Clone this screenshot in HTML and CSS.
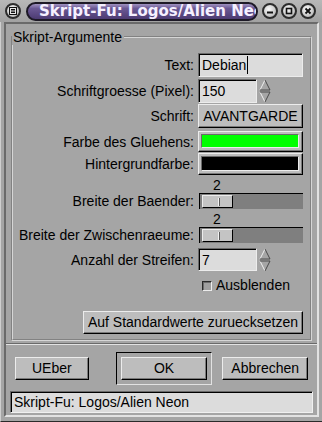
FILE: index.html
```html
<!DOCTYPE html>
<html>
	<head>
		<link rel="stylesheet" href="styles.css">
	</head>
	<body>
		<div class="window">
			<div class="titlebar">
				<span class="knob">
					<svg width="8" height="8" viewBox="0 0 8 8"><rect x="0.5" y="0.5" width="7" height="7" fill="#e8e8e8" stroke="#111"/><path d="M2 2.5h4M2 4h4M2 5.5h4" stroke="#111" stroke-width="1"/></svg>
				</span>
				<div class="pill"><span>Skript-Fu: Logos/Alien Neon</span></div>
				<span class="knob">
					<svg width="8" height="8" viewBox="0 0 8 8"><path d="M1 5.5h6" stroke="#111" stroke-width="2"/></svg>
				</span>
				<span class="knob">
					<svg width="8" height="8" viewBox="0 0 8 8"><rect x="1.5" y="1.5" width="5" height="5" fill="none" stroke="#111" stroke-width="1.6"/></svg>
				</span>
				<span class="knob">
					<svg width="8" height="8" viewBox="0 0 8 8"><path d="M1.5 1.5l5 5M6.5 1.5l-5 5" stroke="#111" stroke-width="1.8"/></svg>
				</span>
			</div>
			<div class="client">
				<fieldset class="args">
					<legend>Skript-Argumente</legend>

					<div class="row r-text">
						<span class="lbl">Text:</span>
						<div class="field entry">Debian<span class="caret"></span></div>
					</div>

					<div class="row r-size">
						<span class="lbl">Schriftgroesse (Pixel):</span>
						<div class="field spin">
							<div class="entry">150</div>
							<svg class="arrows" width="12" height="24" viewBox="0 0 12 24">
								<path d="M6 1L1 11" stroke="#f0f0f0" fill="none"/>
								<path d="M6 1L11 11H1" stroke="#4a4a4a" fill="none"/>
								<path d="M1 13L6 23" stroke="#f0f0f0" fill="none"/>
								<path d="M1 13H11L6 23" stroke="#4a4a4a" fill="none"/>
							</svg>
						</div>
					</div>

					<div class="row r-font">
						<span class="lbl">Schrift:</span>
						<div class="field btn">AVANTGARDE</div>
					</div>

					<div class="row r-glow">
						<span class="lbl">Farbe des Gluehens:</span>
						<div class="field btn swatch"><div class="chip green"></div></div>
					</div>

					<div class="row r-back">
						<span class="lbl">Hintergrundfarbe:</span>
						<div class="field btn swatch"><div class="chip black"></div></div>
					</div>

					<div class="row r-slide">
						<span class="lbl">Breite der Baender:</span>
						<div class="field slider">
							<div class="val">2</div>
							<div class="trough"><div class="thumb"></div></div>
						</div>
					</div>

					<div class="row r-slide">
						<span class="lbl">Breite der Zwischenraeume:</span>
						<div class="field slider">
							<div class="val">2</div>
							<div class="trough"><div class="thumb"></div></div>
						</div>
					</div>

					<div class="row r-count">
						<span class="lbl">Anzahl der Streifen:</span>
						<div class="field spin">
							<div class="entry">7</div>
							<svg class="arrows" width="12" height="24" viewBox="0 0 12 24">
								<path d="M6 1L1 11" stroke="#f0f0f0" fill="none"/>
								<path d="M6 1L11 11H1" stroke="#4a4a4a" fill="none"/>
								<path d="M1 13L6 23" stroke="#f0f0f0" fill="none"/>
								<path d="M1 13H11L6 23" stroke="#4a4a4a" fill="none"/>
							</svg>
						</div>
					</div>

					<div class="row r-check">
						<span class="lbl"></span>
						<div class="field check"><span class="box"></span>Ausblenden</div>
					</div>

					<div class="row r-reset">
						<div class="btn reset">Auf Standardwerte zuruecksetzen</div>
					</div>
				</fieldset>

				<div class="separator"></div>

				<div class="actions">
					<div class="btn about">UEber</div>
					<div class="default"><div class="btn ok">OK</div></div>
					<div class="btn cancel">Abbrechen</div>
				</div>

				<div class="status">Skript-Fu: Logos/Alien Neon</div>
			</div>
		</div>
	</body>
</html>
```

FILE: styles.css
```css
body {
	margin: 0;
	font-family: "Liberation Sans", Arial, sans-serif;
	font-size: 14px;
	color: #000;
}

.window {
	width: 322px;
	height: 422px;
	box-sizing: border-box;
	padding: 0 3px 4px;
	background: #a5a5a5;
	display: flex;
	flex-direction: column;
	border-left: 1px solid #cfcfcf;
	border-bottom: 1px solid #2a2a2a;
}

/* title bar */
.titlebar {
	height: 22px;
	flex: none;
	display: flex;
	align-items: center;
	margin: 0 -3px 0 -4px;
	padding-left: 5px;
	background: linear-gradient(#b8b8b8, #a2a2a2);
}

.knob {
	width: 16px;
	height: 16px;
	box-sizing: border-box;
	border-radius: 50%;
	border: 2px solid #2c2c2c;
	background: radial-gradient(circle at 40% 35%, #fafafa, #bdbdbd 75%);
	display: flex;
	align-items: center;
	justify-content: center;
	flex: none;
}
.knob svg {
	display: block;
}
.knob + .knob {
	margin-left: 3px;
}

.pill {
	width: 232px;
	height: 19px;
	box-sizing: border-box;
	margin: 0 4px 0 5px;
	border: 2px solid #1d1926;
	border-radius: 10px;
	background: linear-gradient(#a092c0 0%, #6a5894 30%, #4c3b72 100%);
	overflow: hidden;
	flex: none;
}
.pill span {
	display: block;
	padding-left: 11px;
	font-family: "DejaVu Sans", sans-serif;
	font-weight: bold;
	font-size: 15px;
	line-height: 15px;
	color: #f5f0ff;
	white-space: nowrap;
}

/* client area */
.client {
	flex: 1;
	display: flex;
	flex-direction: column;
	padding-top: 5px;
	border: 2px solid;
	border-color: #6a6a6a #e2e2e2 #e2e2e2 #6a6a6a;
}

.args {
	margin: 0 5px;
	padding: 8px 7px 5px 2px;
	border: 2px groove #d6d6d6;
}
.args legend {
	margin-left: -3px;
	padding: 0 2px 0 1px;
	line-height: 16px;
}

.row {
	display: flex;
	align-items: center;
	column-gap: 4px;
}
.lbl {
	flex: 1;
	text-align: right;
	white-space: nowrap;
}
.field {
	width: 105px;
	flex: none;
	box-sizing: border-box;
}

.r-text { height: 24px; }
.r-size { height: 24px; margin-top: 2px; }
.r-font { height: 24px; margin-top: 1px; }
.r-glow { height: 21px; margin-top: 3px; }
.r-back { height: 22px; margin-top: 1px; }
.r-slide { align-items: flex-end; margin-top: 2px; }
.r-slide .lbl { line-height: 16px; }
.r-count { height: 23px; margin-top: 5px; }
.r-check { height: 18px; margin-top: 5px; }
.r-reset { justify-content: flex-end; margin-top: 17px; }

/* widgets */
.entry {
	height: 100%;
	box-sizing: border-box;
	padding-left: 3px;
	background: #dcdcdc;
	border: 1px solid;
	border-color: #6a6a6a #ececec #ececec #6a6a6a;
	box-shadow: inset 1px 1px #000;
	line-height: 22px;
	white-space: nowrap;
}
.caret {
	display: inline-block;
	width: 1px;
	height: 18px;
	margin-left: 1px;
	background: #000;
	vertical-align: -4px;
}

.spin {
	display: flex;
	align-items: center;
	column-gap: 2px;
	height: 100%;
}
.spin .entry {
	width: 59px;
}
.arrows {
	display: block;
}

.btn {
	box-sizing: border-box;
	background: #bdbdbd;
	border: 1px solid;
	border-color: #ececec #000 #000 #ececec;
	box-shadow: inset -1px -1px #7a7a7a;
	text-align: center;
	white-space: nowrap;
}
.r-font .btn {
	height: 100%;
	line-height: 22px;
}

.swatch {
	height: 100%;
	padding: 2px 3px 3px 2px;
}
.chip {
	height: 100%;
	border: 1px solid;
	border-color: #6a6a6a #ececec #ececec #6a6a6a;
	box-sizing: border-box;
}
.green { background: #00ff00; }
.black { background: #000; }

.slider {
	display: flex;
	flex-direction: column;
}
.slider .val {
	width: 32px;
	margin-left: 3px;
	text-align: center;
	line-height: 16px;
}
.trough {
	height: 16px;
	margin-left: 1px;
	box-sizing: border-box;
	padding: 1px 0 0 2px;
	background: #7f7f7f;
	border-top: 1px solid #000;
	border-left: 1px solid #000;
}
.thumb {
	width: 31px;
	height: 13px;
	box-sizing: border-box;
	background: linear-gradient(90deg, transparent 15px, #f2f2f2 15px, #f2f2f2 16px, #5a5a5a 16px, #5a5a5a 17px, transparent 17px) center / 100% 8px no-repeat, #c4c4c4;
	border: 1px solid;
	border-color: #ececec #000 #000 #ececec;
}

.check {
	display: flex;
	align-items: center;
	padding-left: 4px;
	column-gap: 4px;
}
.box {
	width: 10px;
	height: 10px;
	box-sizing: border-box;
	background: #a0a0a0;
	border: 1px solid;
	border-color: #2a2a2a #ececec #ececec #2a2a2a;
	box-shadow: inset 1px 1px #6a6a6a;
	margin-top: 1px;
}

.reset {
	width: 220px;
	height: 23px;
	line-height: 21px;
}

/* action area */
.separator {
	height: 0;
	margin-top: 2px;
	border-top: 1px solid #6a6a6a;
	border-bottom: 1px solid #e2e2e2;
}

.actions {
	display: flex;
	align-items: center;
	padding: 7px 9px 0;
}
.actions .btn {
	height: 23px;
	line-height: 21px;
}
.about {
	width: 74px;
	margin-right: 27px;
}
.default {
	width: 97px;
	height: 33px;
	box-sizing: border-box;
	padding: 4px;
	margin-right: 10px;
	border: 1px solid;
	border-color: #000 #e2e2e2 #e2e2e2 #000;
}
.cancel {
	width: 86px;
}

.status {
	margin: 6px 4px 0;
	height: 22px;
	box-sizing: border-box;
	padding-left: 3px;
	background: #dcdcdc;
	border: 1px solid;
	border-color: #6a6a6a #f0f0f0 #f0f0f0 #6a6a6a;
	box-shadow: inset 1px 1px #000;
	line-height: 20px;
	white-space: nowrap;
}
```
